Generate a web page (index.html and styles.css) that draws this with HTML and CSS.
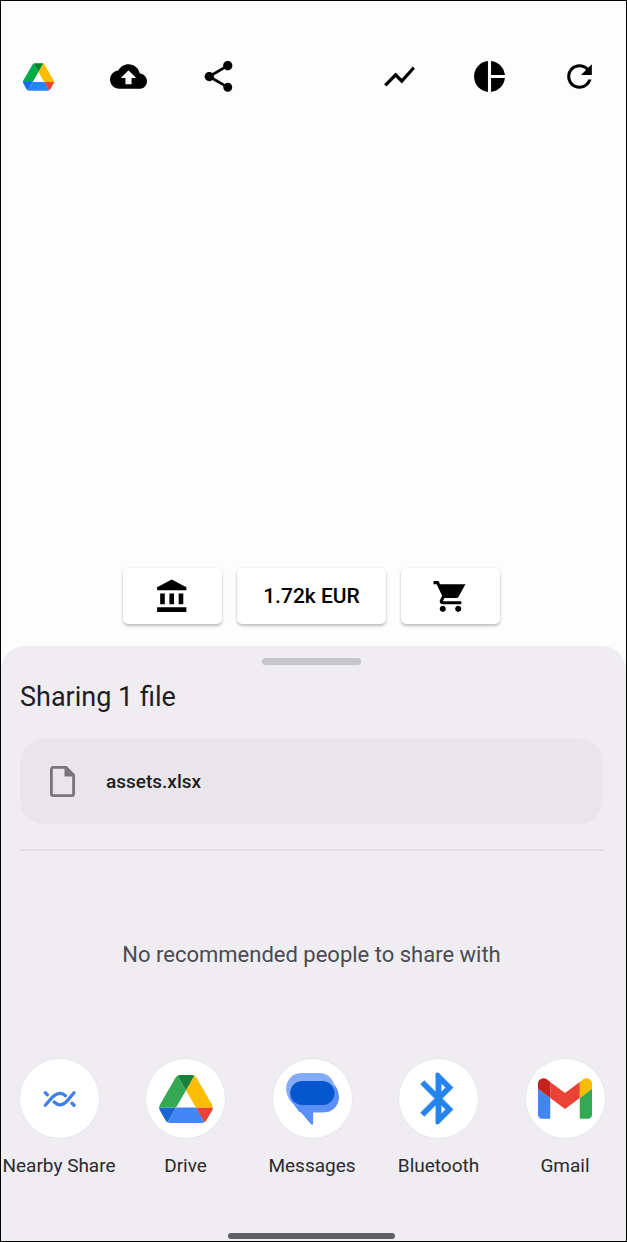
FILE: index.html
```html
<!DOCTYPE html>
<html lang="en">
<head>
<meta charset="utf-8">
<meta name="viewport" content="width=device-width, initial-scale=1">
<title>Sharing 1 file</title>
<link rel="stylesheet" href="styles.css">
</head>
<body>
<svg class="defs" aria-hidden="true">
  <symbol id="drive" viewBox="0 0 87.3 78">
    <path class="d-navy" d="m6.6 66.85 3.85 6.65c.8 1.4 1.95 2.5 3.3 3.3l13.75-23.8h-27.5c0 1.55.4 3.1 1.2 4.5z"/>
    <path class="d-green" d="m43.65 25-13.75-23.8c-1.35.8-2.5 1.9-3.3 3.3l-25.4 44a9.06 9.06 0 0 0-1.2 4.5h27.5z"/>
    <path class="d-red" d="m73.55 76.8c1.35-.8 2.5-1.9 3.3-3.3l1.6-2.75 7.65-13.25c.8-1.4 1.2-2.95 1.2-4.5h-27.502l5.852 11.5z"/>
    <path class="d-forest" d="m43.65 25 13.75-23.8c-1.35-.8-2.9-1.2-4.5-1.2h-18.5c-1.6 0-3.15.45-4.5 1.2z"/>
    <path class="d-blue" d="m59.8 53h-32.3l-13.75 23.8c1.35.8 2.9 1.2 4.5 1.2h50.8c1.6 0 3.15-.45 4.5-1.2z"/>
    <path class="d-yellow" d="m73.4 26.5-12.7-22c-.8-1.4-1.95-2.5-3.3-3.3l-13.75 23.8 16.15 28h27.45c0-1.55-.4-3.1-1.2-4.5z"/>
  </symbol>
</svg>
<div class="screen">
  <main class="app">
    <nav class="toolbar" aria-label="Actions">
      <button class="tool" aria-label="Google Drive"><svg class="tool-drive"><use href="#drive"/></svg></button>
      <button class="tool" aria-label="Upload"><svg class="icon" viewBox="0 0 24 24"><path d="M19.35 10.04C18.67 6.59 15.64 4 12 4 9.11 4 6.6 5.64 5.35 8.04 2.34 8.36 0 10.91 0 14c0 3.31 2.69 6 6 6h13c2.76 0 5-2.24 5-5 0-2.64-2.05-4.78-4.65-4.96zM14 13v4h-4v-4H7l5-5 5 5h-3z"/></svg></button>
      <button class="tool" aria-label="Share"><svg class="icon" viewBox="0 0 24 24"><path d="M18 16.08c-.76 0-1.44.3-1.96.77L8.91 12.7c.05-.23.09-.46.09-.7s-.04-.47-.09-.7l7.05-4.11c.54.5 1.25.81 2.04.81 1.66 0 3-1.34 3-3s-1.34-3-3-3-3 1.34-3 3c0 .24.04.47.09.7L8.04 9.81C7.5 9.31 6.79 9 6 9c-1.66 0-3 1.34-3 3s1.34 3 3 3c.79 0 1.5-.31 2.04-.81l7.12 4.16c-.05.21-.08.43-.08.65 0 1.61 1.31 2.92 2.92 2.92s2.92-1.31 2.92-2.92-1.31-2.92-2.92-2.92z"/></svg></button>
      <button class="tool tool-trend" aria-label="Trend"><svg class="icon" viewBox="0 0 24 24"><path d="M3.5 18.49l6-6.01 4 4L22 6.92l-1.41-1.41-7.09 7.97-4-4L2 16.99z"/></svg></button>
      <button class="tool" aria-label="Allocation"><svg class="icon" viewBox="0 0 24 24"><path d="M11 2v20c-5.07-.5-9-4.79-9-10s3.93-9.5 9-10zm2.03 0v8.99H22c-.47-4.74-4.24-8.52-8.97-8.99zm0 11.01V22c4.74-.47 8.5-4.25 8.97-8.99h-8.97z"/></svg></button>
      <button class="tool" aria-label="Refresh"><svg class="icon" viewBox="0 0 24 24"><path d="M17.65 6.35C16.2 4.9 14.21 4 12 4c-4.42 0-7.99 3.58-7.99 8s3.57 8 7.99 8c3.73 0 6.84-2.55 7.73-6h-2.08c-.82 2.33-3.04 4-5.65 4-3.31 0-6-2.69-6-6s2.69-6 6-6c1.66 0 3.14.69 4.22 1.78L13 11h7V4l-2.35 2.35z"/></svg></button>
    </nav>
    <div class="summary">
      <button class="tile" aria-label="Bank"><svg class="icon" viewBox="0 0 24 24"><path d="M11.5 1L2 6v2h19V6M16 10v7h3v-7M2 22h19v-3H2v3M10 10v7h3v-7M4 10v7h3v-7H4z"/></svg></button>
      <button class="tile tile-amount">1.72k EUR</button>
      <button class="tile" aria-label="Cart"><svg class="icon" viewBox="0 0 24 24"><path d="M7 18c-1.1 0-1.99.9-1.99 2S5.9 22 7 22s2-.9 2-2-.9-2-2-2zM1 2v2h2l3.6 7.59-1.35 2.45c-.16.28-.25.61-.25.96 0 1.1.9 2 2 2h12v-2H7.42c-.14 0-.25-.11-.25-.25l.03-.12.9-1.63h7.45c.75 0 1.41-.41 1.75-1.03L21.7 4H5.21l-.94-2H1zm16 16c-1.1 0-1.99.9-1.99 2s.89 2 1.99 2 2-.9 2-2-.9-2-2-2z"/></svg></button>
    </div>
  </main>
  <section class="sheet" aria-labelledby="sheet-title">
    <div class="sheet-body">
      <div class="handle"></div>
      <h1 class="title" id="sheet-title">Sharing 1 file</h1>
      <div class="file">
        <svg class="file-icon" viewBox="0 0 25 31"><path d="M3 1.4H16L23.6 9V28a1.6 1.6 0 0 1-1.6 1.6H3A1.6 1.6 0 0 1 1.4 28V3A1.6 1.6 0 0 1 3 1.4z" fill="none" stroke="#77757a" stroke-width="2.8"/><path d="M14.500 1.500V10.500H23.500z" fill="#77757a"/></svg>
        <span class="file-name">assets.xlsx</span>
      </div>
      <hr class="divider">
      <p class="empty">No recommended people to share with</p>
    </div>
    <div class="targets">
      <button class="target">
        <span class="disc"><svg class="nearby" viewBox="0 0 100 54"><g fill="none" stroke="#4380e6" stroke-width="10" stroke-linecap="round"><path d="M7 46L29 21Q51 1 68 17"/><path d="M34 36Q52 54 72 34L94 8"/><path d="M7 8l6 6M88 40l6 6"/></g></svg></span>
        <span class="label">Nearby Share</span>
      </button>
      <button class="target">
        <span class="disc"><svg class="drive"><use href="#drive"/></svg></span>
        <span class="label">Drive</span>
      </button>
      <button class="target">
        <span class="disc"><svg class="messages" viewBox="0 0 158 156"><path d="M48 24H128C146 30 158 50 158 71 158 98 138 118 112 118H81V150C81 156 77 157 73 152L16 84z" fill="#5a8ff8"/><path d="M46 0H98C124 0 142 16 146 44L120 96H25C9 84 0 66 0 46 0 20 20 0 46 0z" fill="#82abfc"/><path d="M12 62C14 84 28 97 50 97H110L145 60V38L158 71C158 98 138 118 112 118H40L17 86C13 80 12 72 12 62z" fill="#5a8ff8"/><rect x="12" y="24" width="133" height="72" rx="36" fill="#0556cf"/></svg></span>
        <span class="label">Messages</span>
      </button>
      <button class="target">
        <span class="disc"><svg class="bluetooth" viewBox="0 0 24 24"><path fill="#2484ec" stroke="#2484ec" stroke-width=".3" d="M17.71 7.71L12 2h-1v7.59L6.41 5 5 6.41 10.59 12 5 17.59 6.41 19 11 14.41V22h1l5.71-5.71-4.3-4.29 4.3-4.29zM13 5.83l1.88 1.88L13 9.59V5.83zm1.880 10.460L13 18.170v-3.760l1.880 1.880z"/></svg></span>
        <span class="label">Bluetooth</span>
      </button>
      <button class="target">
        <span class="disc"><svg class="gmail" viewBox="52 42 88 66"><path fill="#4285f4" d="M58 108h14V74L52 59v43c0 3.32 2.69 6 6 6"/><path fill="#34a853" d="M120 108h14c3.32 0 6-2.69 6-6V59l-20 15"/><path fill="#fbbc04" d="M120 48v26l20-15v-8c0-7.42-8.47-11.65-14.4-7.2"/><path fill="#ea4335" d="M72 74V48l24 18 24-18v26L96 92"/><path fill="#c5221f" d="M52 51v8l20 15V48l-5.600-4.200c-5.940-4.450-14.400-.22-14.400 7.200"/></svg></span>
        <span class="label">Gmail</span>
      </button>
    </div>
    <div class="home">
      <div class="home-bar"></div>
    </div>
  </section>
</div>
</body>
</html>
```
FILE: styles.css
```css
* {
  box-sizing: border-box;
}

body {
  margin: 0;
  font-family: Roboto, "Liberation Sans", sans-serif;
  color: #1e1d22;
}

button {
  margin: 0;
  padding: 0;
  border: 0;
  background: none;
  font: inherit;
  color: inherit;
  cursor: pointer;
}

svg {
  display: block;
}

.defs {
  position: absolute;
  width: 0;
  height: 0;
}

.d-navy {
  fill: var(--navy, #1967d2);
}

.d-green {
  fill: var(--green, #34a853);
}

.d-red {
  fill: #ea4335;
}

.d-forest {
  fill: var(--forest, #188038);
}

.d-blue {
  fill: var(--blue, #4285f4);
}

.d-yellow {
  fill: #fbbc04;
}

.screen {
  display: flex;
  flex-direction: column;
  min-height: 100vh;
  border: 1px solid #000;
  background: #fdfdfd;
}

.app {
  flex: 1;
  display: flex;
  flex-direction: column;
  justify-content: space-between;
  gap: 48px;
  padding: 56px 0 22px;
}

.toolbar {
  display: grid;
  grid-template-columns: repeat(7, 38px);
  justify-content: space-between;
  padding: 0 27px 0 18px;
}

.tool {
  display: flex;
  align-items: center;
  justify-content: center;
  height: 39px;
}

.tool-trend {
  grid-column: 5;
}

.icon {
  width: 37px;
  height: 37px;
  fill: #000;
}

.tool-drive {
  --navy: #1a6fe0;
  --green: #00ac47;
  --forest: #00832d;
  --blue: #2684fc;
  width: 31px;
  height: 28px;
}

.summary {
  display: flex;
  justify-content: center;
  gap: 15px;
  padding: 0 23px 0 19px;
}

.tile {
  display: flex;
  align-items: center;
  justify-content: center;
  width: 99px;
  height: 56px;
  border-radius: 5px;
  background: #fff;
  box-shadow: 0 2px 3px rgba(0, 0, 0, 0.24), 0 0 2px rgba(0, 0, 0, 0.08);
  color: #000;
}

.tile-amount {
  width: 149px;
  font-size: 21px;
  font-weight: 500;
}

.sheet {
  border-radius: 24px 24px 0 0;
  background: #efedf2;
}

.sheet-body {
  padding: 12px 23px 0 19px;
}

.handle {
  width: 99px;
  height: 7px;
  margin: 0 auto;
  border-radius: 4px;
  background: #c6c6c8;
}

.title {
  margin: 14px 0 24px;
  font-size: 27px;
  line-height: 36px;
  font-weight: 400;
}

.file {
  display: flex;
  align-items: center;
  gap: 31px;
  height: 85px;
  padding: 0 30px;
  border-radius: 24px;
  background: #e8e6eb;
}

.file-icon {
  width: 25px;
  height: 31px;
}

.file-name {
  font-size: 19px;
  font-weight: 500;
}

.divider {
  height: 2px;
  margin: 25px 0 0;
  border: 0;
  background: #e3e1e6;
}

.empty {
  margin: 0;
  padding: 90px 0;
  font-size: 22px;
  line-height: 28px;
  text-align: center;
  color: #4b4a50;
}

.targets {
  display: grid;
  grid-template-columns: repeat(5, 112px);
  justify-content: space-between;
  padding: 0 5px 0 2px;
}

.target {
  display: flex;
  flex-direction: column;
  align-items: center;
  gap: 16px;
}

.disc {
  display: flex;
  align-items: center;
  justify-content: center;
  width: 79px;
  height: 79px;
  border-radius: 50%;
  background: #fff;
  box-shadow: 0 0 2px rgba(0, 0, 0, 0.08);
}

.label {
  font-size: 19px;
  line-height: 24px;
  white-space: nowrap;
  color: #2b2a2f;
}

.nearby {
  width: 33px;
  height: 18px;
}

.drive {
  width: 54px;
  height: 48px;
}

.messages {
  width: 53px;
  height: 52px;
}

.bluetooth {
  width: 61px;
  height: 61px;
}

.gmail {
  width: 54px;
  height: 41px;
}

.home {
  padding: 55px 23px 2px 19px;
}

.home-bar {
  width: 167px;
  height: 6px;
  margin: 0 auto;
  border-radius: 3px;
  background: #606062;
}
```
